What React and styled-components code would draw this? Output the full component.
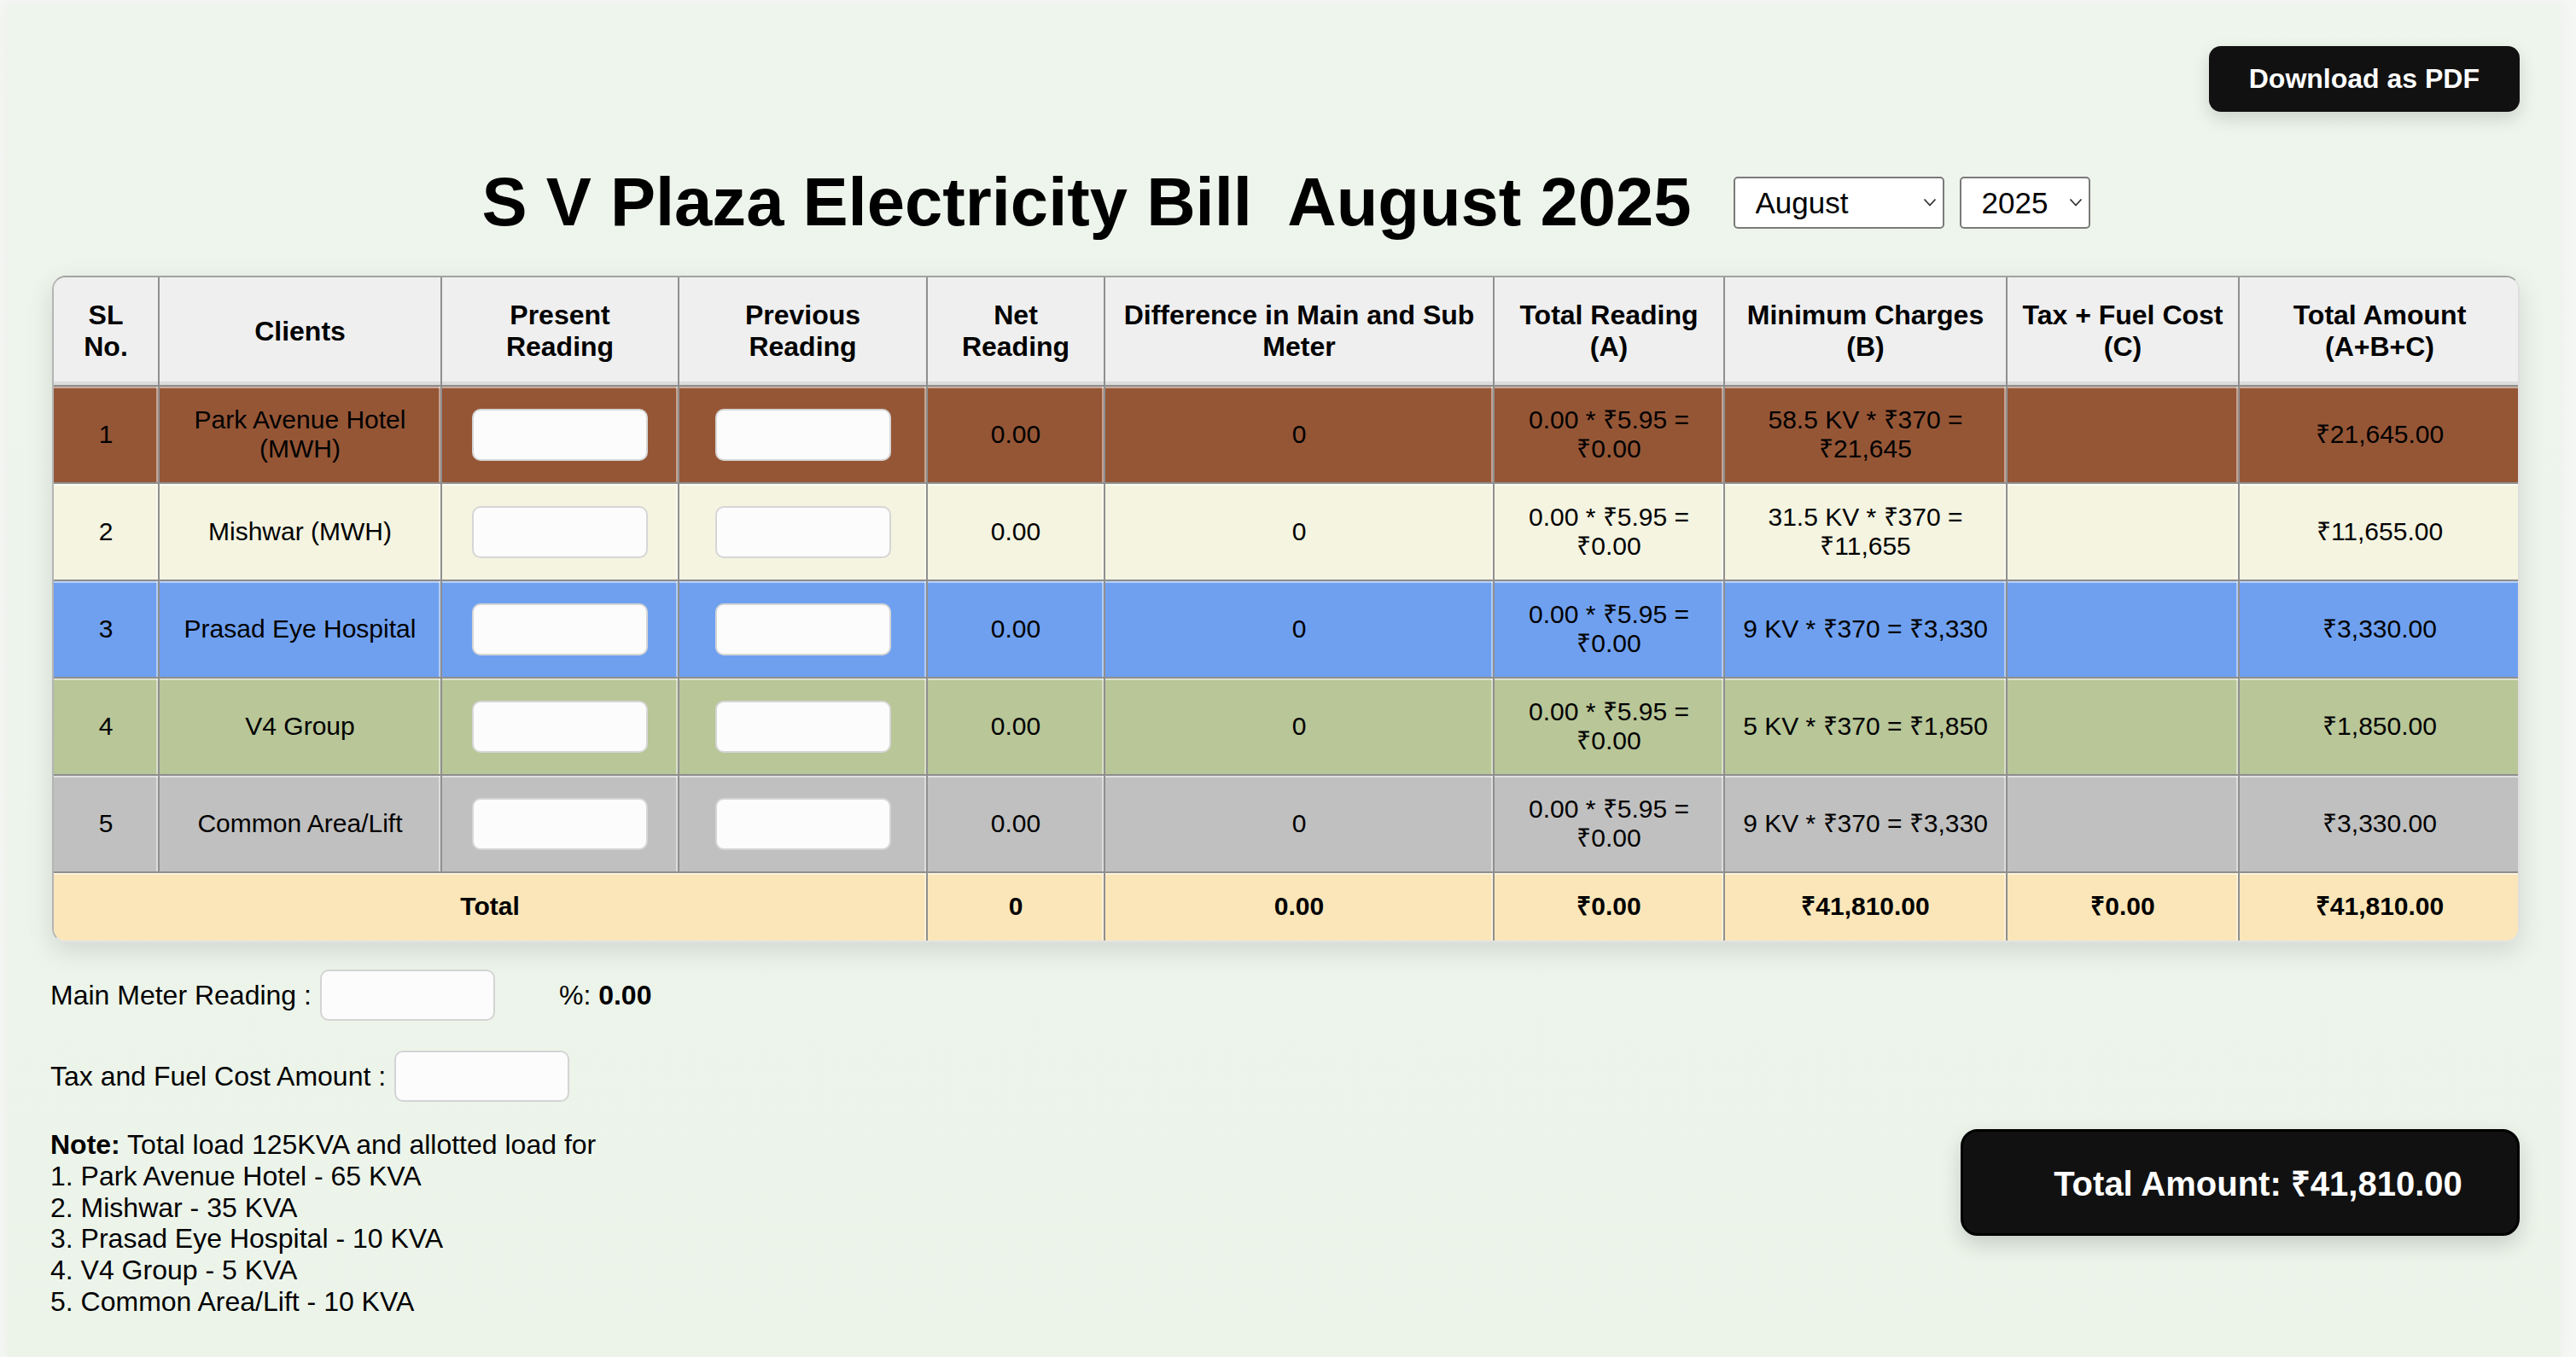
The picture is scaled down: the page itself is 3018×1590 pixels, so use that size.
import styled, { createGlobalStyle } from "styled-components";

const GlobalStyle = createGlobalStyle`
  * {
    box-sizing: border-box;
  }

  html,
  body {
    margin: 0;
    padding: 0;
  }

  body {
    background: #f5f7f4;
    color: #000;
    font-family: "Liberation Sans", Arial, Helvetica, sans-serif;
  }
`;

const columns = [124, 331, 278, 291, 208, 456, 270, 331, 272, 328];

const headers = [
  "SL No.",
  "Clients",
  "Present Reading",
  "Previous Reading",
  "Net Reading",
  "Difference in Main and Sub Meter",
  "Total Reading (A)",
  "Minimum Charges (B)",
  "Tax + Fuel Cost (C)",
  "Total Amount (A+B+C)",
];

const clients = [
  {
    id: 1,
    name: "Park Avenue Hotel (MWH)",
    bg: "#955636",
    minimum: "58.5 KV * ₹370 = ₹21,645",
    amount: "₹21,645.00",
  },
  {
    id: 2,
    name: "Mishwar (MWH)",
    bg: "#f4f4e1",
    minimum: "31.5 KV * ₹370 = ₹11,655",
    amount: "₹11,655.00",
  },
  {
    id: 3,
    name: "Prasad Eye Hospital",
    bg: "#6fa0f0",
    minimum: "9 KV * ₹370 = ₹3,330",
    amount: "₹3,330.00",
  },
  {
    id: 4,
    name: "V4 Group",
    bg: "#b8c698",
    minimum: "5 KV * ₹370 = ₹1,850",
    amount: "₹1,850.00",
  },
  {
    id: 5,
    name: "Common Area/Lift",
    bg: "#c0c0c0",
    minimum: "9 KV * ₹370 = ₹3,330",
    amount: "₹3,330.00",
  },
];

const Chevron = () => (
  <svg width="16" height="10" viewBox="0 0 16 10" fill="none">
    <path d="M1.5 1.5 L8 8.5 L14.5 1.5" stroke="#333" strokeWidth="1.8" />
  </svg>
);

const App = () => {
  return (
    <>
      <GlobalStyle />
      <Page>
        <TopBar>
          <DownloadButton>Download as PDF</DownloadButton>
        </TopBar>

        <TitleRow>
          <Title>S V Plaza Electricity Bill&nbsp; August 2025</Title>
          <SelectWrap $width={247}>
            <Select defaultValue="August">
              <option>August</option>
            </Select>
            <ChevronSlot>
              <Chevron />
            </ChevronSlot>
          </SelectWrap>
          <SelectWrap $width={153}>
            <Select defaultValue="2025">
              <option>2025</option>
            </Select>
            <ChevronSlot>
              <Chevron />
            </ChevronSlot>
          </SelectWrap>
        </TitleRow>

        <TableCard>
          <Table>
            <colgroup>
              {columns.map((w, i) => (
                <col key={i} style={{ width: w }} />
              ))}
            </colgroup>
            <thead>
              <Row $height={128}>
                {headers.map((h) => (
                  <HeadCell key={h}>{h}</HeadCell>
                ))}
              </Row>
            </thead>
            <tbody>
              {clients.map((c) => (
                <Row key={c.id} $height={114}>
                  <Cell $bg={c.bg}>{c.id}</Cell>
                  <Cell $bg={c.bg}>{c.name}</Cell>
                  <Cell $bg={c.bg}>
                    <ReadingInput />
                  </Cell>
                  <Cell $bg={c.bg}>
                    <ReadingInput />
                  </Cell>
                  <Cell $bg={c.bg}>0.00</Cell>
                  <Cell $bg={c.bg}>0</Cell>
                  <Cell $bg={c.bg}>0.00 * ₹5.95 = ₹0.00</Cell>
                  <Cell $bg={c.bg}>{c.minimum}</Cell>
                  <Cell $bg={c.bg}></Cell>
                  <Cell $bg={c.bg}>{c.amount}</Cell>
                </Row>
              ))}
              <Row $height={79}>
                <Cell $bg="#fbe6b9" $bold colSpan={4}>
                  Total
                </Cell>
                <Cell $bg="#fbe6b9" $bold>0</Cell>
                <Cell $bg="#fbe6b9" $bold>0.00</Cell>
                <Cell $bg="#fbe6b9" $bold>₹0.00</Cell>
                <Cell $bg="#fbe6b9" $bold>₹41,810.00</Cell>
                <Cell $bg="#fbe6b9" $bold>₹0.00</Cell>
                <Cell $bg="#fbe6b9" $bold>₹41,810.00</Cell>
              </Row>
            </tbody>
          </Table>
        </TableCard>

        <Footer>
          <FieldRow>
            <Label>Main Meter Reading :</Label>
            <FieldInput />
            <Percent>
              %: <b>0.00</b>
            </Percent>
          </FieldRow>
          <FieldRow>
            <Label>Tax and Fuel Cost Amount :</Label>
            <FieldInput />
          </FieldRow>
          <BottomRow>
            <Note>
              <b>Note:</b> Total load 125KVA and allotted load for
              <br />
              1. Park Avenue Hotel - 65 KVA
              <br />
              2. Mishwar - 35 KVA
              <br />
              3. Prasad Eye Hospital - 10 KVA
              <br />
              4. V4 Group - 5 KVA
              <br />
              5. Common Area/Lift - 10 KVA
            </Note>
            <TotalBox>Total Amount: ₹41,810.00</TotalBox>
          </BottomRow>
        </Footer>
      </Page>
    </>
  );
};

const Page = styled.main`
  margin: 5px 18px 0 8px;
  min-height: 1585px;
  padding: 49px 48px 40px 53px;
  background: linear-gradient(180deg, #eef5ec 0%, #ecf4ea 100%);
  box-shadow: 0 0 18px rgba(0, 0, 0, 0.04);
`;

const TopBar = styled.div`
  display: flex;
  justify-content: flex-end;
`;

const DownloadButton = styled.button`
  height: 77px;
  padding: 0 47px;
  border: none;
  border-radius: 14px;
  background: #111;
  color: #fff;
  font-family: inherit;
  font-size: 32px;
  font-weight: 700;
  box-shadow: 0 8px 20px rgba(0, 0, 0, 0.14);
  cursor: pointer;
`;

const TitleRow = styled.div`
  display: flex;
  align-items: center;
  justify-content: center;
  gap: 18px;
  margin-top: 60px;
`;

const Title = styled.h1`
  margin: 0 31px 0 0;
  font-size: 79.6px;
  font-weight: 700;
  line-height: 92px;
`;

const SelectWrap = styled.div`
  position: relative;
  width: ${(p) => p.$width}px;
  height: 61px;
`;

const Select = styled.select`
  appearance: none;
  width: 100%;
  height: 100%;
  padding: 0 0 0 24px;
  border: 2px solid #7a7a7a;
  border-radius: 5px;
  background: #fff;
  color: #000;
  font-family: inherit;
  font-size: 35px;
`;

const ChevronSlot = styled.span`
  position: absolute;
  top: 50%;
  right: 9px;
  display: flex;
  transform: translateY(-50%);
  pointer-events: none;
`;

const TableCard = styled.div`
  margin-top: 40px;
  border-top: 2px solid #a2a2a2;
  border-left: 2px solid #b4b4b4;
  border-right: 2px solid #dedede;
  border-bottom: 2px solid #e2e2e2;
  border-radius: 16px;
  overflow: hidden;
  box-shadow: 0 10px 30px rgba(0, 0, 0, 0.12);
`;

const Table = styled.table`
  width: 100%;
  table-layout: fixed;
  border-collapse: separate;
  border-spacing: 0;
`;

const Row = styled.tr`
  height: ${(p) => p.$height}px;

  &:last-child td {
    border-bottom: none;
  }
`;

const HeadCell = styled.th`
  padding: 0 16px;
  background: #efefef;
  border-right: 2px solid #8f8f8f;
  border-bottom: 2px solid #8f8f8f;
  box-shadow: inset 0 -4px 0 #dcdcdc;
  font-size: 32px;
  font-weight: 700;
  line-height: 1.15;
  text-align: center;
  vertical-align: middle;

  &:last-child {
    border-right: none;
  }
`;

const Cell = styled.td`
  padding: 0 16px;
  background: ${(p) => p.$bg};
  border-right: 2px solid #8f8f8f;
  border-bottom: 2px solid #8f8f8f;
  box-shadow: inset 0 2px 0 rgba(255, 255, 255, 0.5),
    inset -2px 0 0 rgba(255, 255, 255, 0.45);
  font-size: 30px;
  font-weight: ${(p) => (p.$bold ? 700 : 400)};
  line-height: 1.15;
  text-align: center;
  vertical-align: middle;

  &:last-child {
    border-right: none;
  }
`;

const ReadingInput = styled.input`
  display: block;
  width: 206px;
  height: 61px;
  margin: 0 auto;
  border: 2px solid #d6d6d6;
  border-radius: 10px;
  background: #fcfcfc;
`;

const Footer = styled.section`
  display: flex;
  flex-direction: column;
  gap: 35px;
  margin-top: 32px;
`;

const FieldRow = styled.div`
  display: flex;
  align-items: center;
  height: 60px;
  font-size: 32px;
`;

const Label = styled.label`
  margin-right: 10px;
  margin-left: -2px;
`;

const FieldInput = styled.input`
  width: 205px;
  height: 60px;
  border: 2px solid #d4d4d4;
  border-radius: 10px;
  background: #fcfcfc;
`;

const Percent = styled.span`
  margin-left: 75px;

  b {
    font-weight: 700;
  }
`;

const BottomRow = styled.div`
  display: flex;
  align-items: flex-start;
  justify-content: space-between;
  margin-top: -3px;
`;

const Note = styled.p`
  margin: 0 0 0 -2px;
  font-size: 32px;
  line-height: 1.15;
`;

const TotalBox = styled.div`
  display: flex;
  align-items: center;
  justify-content: center;
  width: 655px;
  height: 125px;
  padding-left: 42px;
  border: 3px solid #000;
  border-radius: 20px;
  background: #111;
  color: #fff;
  font-size: 40px;
  font-weight: 700;
  box-shadow: 0 10px 24px rgba(0, 0, 0, 0.16);
`;

export default App;
